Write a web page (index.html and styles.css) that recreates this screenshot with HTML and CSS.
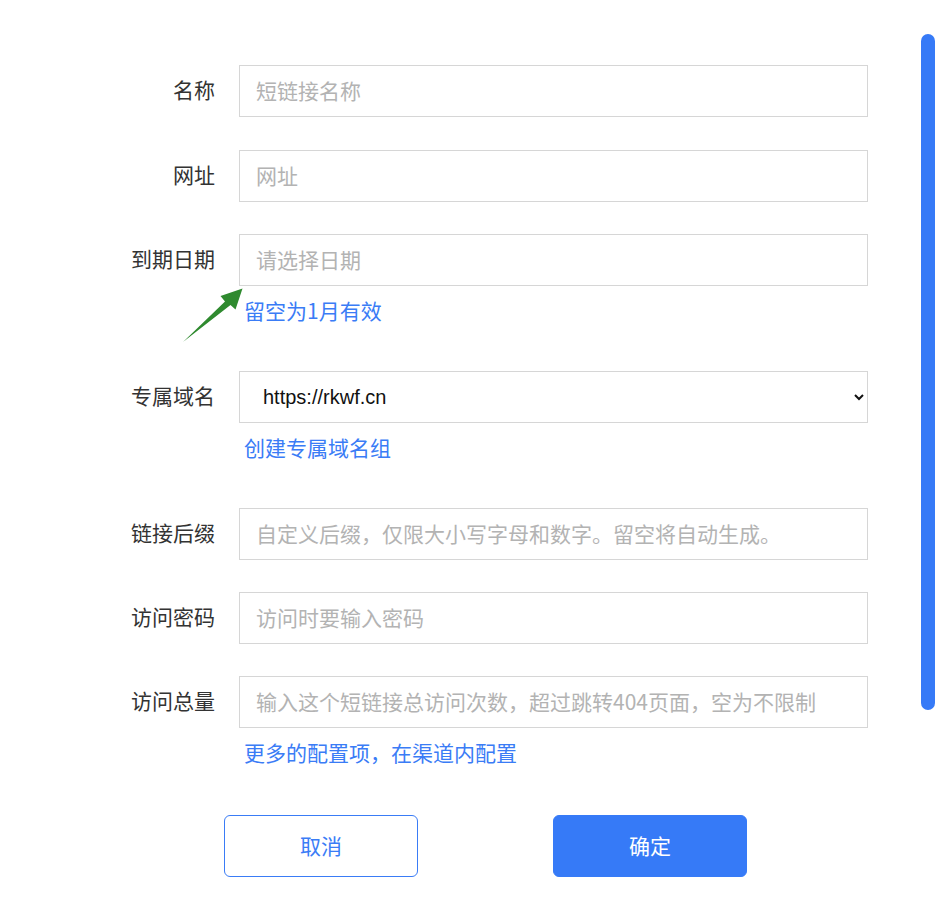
FILE: index.html
```html
<!DOCTYPE html>
<html lang="zh-CN">
<head>
    <meta charset="UTF-8">
    <meta name="viewport" content="width=device-width, initial-scale=1.0">
    <title>创建短链接</title>
    <link rel="stylesheet" href="styles.css">
</head>
<body>
    <form class="link-form">
        <div class="field first">
            <label class="label" for="name">名称</label>
            <input class="control" id="name" type="text" placeholder="短链接名称">
        </div>
        <div class="field">
            <label class="label" for="url">网址</label>
            <input class="control" id="url" type="text" placeholder="网址">
        </div>
        <div class="field has-hint">
            <label class="label" for="expire">到期日期</label>
            <input class="control" id="expire" type="text" placeholder="请选择日期">
            <div class="hint">留空为1月有效</div>
        </div>
        <div class="field has-hint">
            <label class="label" for="domain">专属域名</label>
            <select class="control select" id="domain">
                <option>https://rkwf.cn</option>
            </select>
            <a class="hint" href="#">创建专属域名组</a>
        </div>
        <div class="field">
            <label class="label" for="suffix">链接后缀</label>
            <input class="control" id="suffix" type="text" placeholder="自定义后缀，仅限大小写字母和数字。留空将自动生成。">
        </div>
        <div class="field">
            <label class="label" for="pwd">访问密码</label>
            <input class="control" id="pwd" type="text" placeholder="访问时要输入密码">
        </div>
        <div class="field has-hint last">
            <label class="label" for="total">访问总量</label>
            <input class="control" id="total" type="text" placeholder="输入这个短链接总访问次数，超过跳转404页面，空为不限制">
            <a class="hint" href="#">更多的配置项，在渠道内配置</a>
        </div>
        <div class="actions">
            <button type="button" class="btn btn-cancel">取消</button>
            <button type="button" class="btn btn-ok">确定</button>
        </div>
    </form>

    <!-- annotation arrow -->
    <svg class="arrow" width="942" height="900" viewBox="0 0 942 900">
        <polygon points="183,342 225,301.5 220.5,296 242.5,288.5 235.5,309.5 230.5,305" fill="#2f8a2f"/>
    </svg>

    <div class="scroll-thumb"></div>
</body>
</html>
```

FILE: styles.css
```css
body {
    margin: 0;
    background: #fff;
    font-family: "Noto Sans CJK SC", "Liberation Sans", sans-serif;
    font-size: 21px;
    color: #333;
}
.link-form {
    padding-top: 65px;
}
.field {
    display: grid;
    grid-template-columns: 215px 629px;
    column-gap: 24px;
    margin-bottom: 32px;
}
.field.first {
    margin-bottom: 33px;
}
.field.has-hint {
    margin-bottom: 47px;
}
.field.last {
    margin-bottom: 49px;
}
.label {
    text-align: right;
    line-height: 48px;
    color: #333;
}
.control {
    box-sizing: border-box;
    height: 52px;
    border: 1px solid #d6d6d6;
    border-radius: 0;
    padding: 0 16px 3px;
    font-family: "Noto Sans CJK SC", sans-serif;
    font-size: 21px;
    color: #222;
    background: #fff;
    outline: none;
}
.control::placeholder {
    color: #b3b3b3;
}
.select {
    padding: 0 10px 0 19px;
    font-family: "Liberation Sans", Arial, sans-serif;
    font-size: 20px;
    color: #111;
}
.hint {
    grid-column: 2;
    margin-top: 10px;
    padding-left: 5px;
    line-height: 28px;
    color: #3a7cf6;
    text-decoration: none;
}
.actions {
    display: flex;
    gap: 135px;
    padding-left: 224px;
}
.btn {
    width: 194px;
    height: 62px;
    padding-bottom: 3px;
    border-radius: 6px;
    font-family: "Noto Sans CJK SC", sans-serif;
    font-size: 21px;
    cursor: pointer;
}
.btn-cancel {
    background: #fff;
    border: 1px solid #3a7cf6;
    color: #3a7cf6;
}
.btn-ok {
    background: #367af7;
    border: 1px solid #367af7;
    color: #fff;
}
.arrow {
    position: absolute;
    left: 0;
    top: 0;
    pointer-events: none;
}
.scroll-thumb {
    position: absolute;
    left: 921px;
    top: 34px;
    width: 14px;
    height: 676px;
    border-radius: 7px;
    background: #367af7;
}
```
